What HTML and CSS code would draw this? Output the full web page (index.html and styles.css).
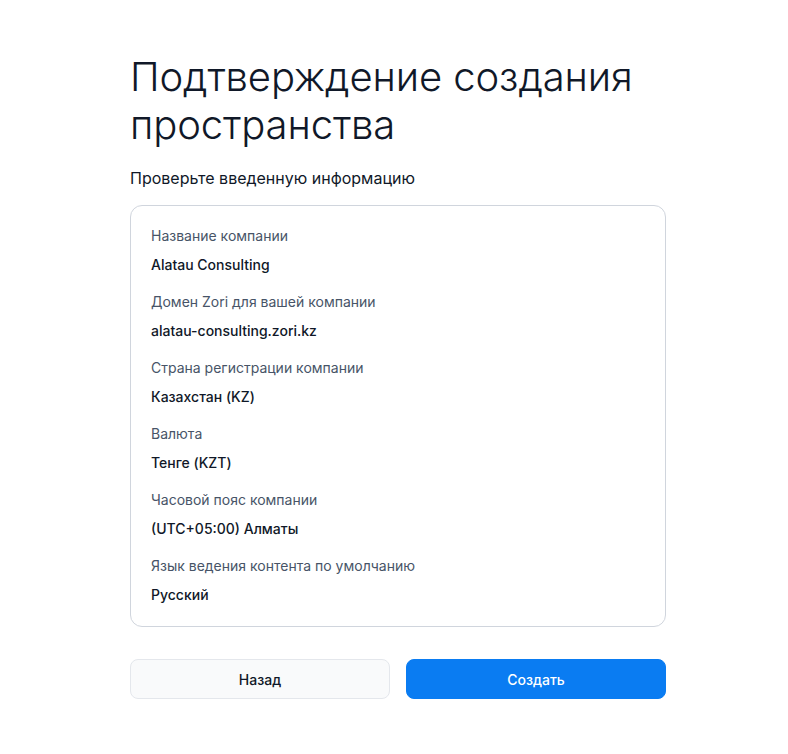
FILE: index.html
```html
<!DOCTYPE html>
<html lang="ru">
<head>
<meta charset="utf-8">
<title>Подтверждение создания пространства</title>
<link rel="stylesheet" href="styles.css">
</head>
<body>
<main class="page">
  <h1 class="title">Подтверждение создания пространства</h1>
  <p class="subtitle">Проверьте введенную информацию</p>
  <section class="card">
    <div class="item">
      <div class="label">Название компании</div>
      <div class="value">Alatau Consulting</div>
    </div>
    <div class="item">
      <div class="label">Домен Zori для вашей компании</div>
      <div class="value">alatau-consulting.zori.kz</div>
    </div>
    <div class="item">
      <div class="label">Страна регистрации компании</div>
      <div class="value">Казахстан (KZ)</div>
    </div>
    <div class="item">
      <div class="label">Валюта</div>
      <div class="value">Тенге (KZT)</div>
    </div>
    <div class="item">
      <div class="label">Часовой пояс компании</div>
      <div class="value">(UTC+05:00) Алматы</div>
    </div>
    <div class="item">
      <div class="label">Язык ведения контента по умолчанию</div>
      <div class="value">Русский</div>
    </div>
  </section>
  <div class="actions">
    <button class="btn btn-secondary" type="button">Назад</button>
    <button class="btn btn-primary" type="button">Создать</button>
  </div>
</main>
</body>
</html>
```
FILE: styles.css
```css
* { box-sizing: border-box; }
html, body { margin: 0; background: #ffffff; }
body {
  font-family: Inter, "Noto Sans", "Liberation Sans", sans-serif;
  color: #101828;
  padding-left: 8px;
}
.page {
  width: 536px;
  margin: 0 auto;
  padding-top: 53px;
}
.title {
  margin: 0;
  font-size: 40px;
  line-height: 48px;
  font-weight: 300;
  color: #101828;
  letter-spacing: -0.1px;
}
.subtitle {
  margin: 17px 0 0;
  font-size: 16px;
  line-height: 24px;
  color: #101828;
}
.card {
  margin-top: 15px;
  border: 1px solid #d0d5dd;
  border-radius: 12px;
  padding: 20px 20px 21px 20px;
  display: flex;
  flex-direction: column;
  gap: 17px;
}
.item { display: flex; flex-direction: column; gap: 9px; }
.label {
  font-size: 14px;
  line-height: 20px;
  color: #475467;
}
.value {
  font-size: 14px;
  line-height: 20px;
  font-weight: 500;
  color: #101828;
}
.actions {
  margin-top: 32px;
  display: grid;
  grid-template-columns: 1fr 1fr;
  gap: 16px;
}
.btn {
  height: 40px;
  border-radius: 8px;
  font-family: inherit;
  font-size: 14px;
  font-weight: 500;
  cursor: pointer;
}
.btn-secondary {
  background: #f9fafb;
  border: 1px solid #e4e7ec;
  color: #101828;
}
.btn-primary {
  background: #0a7cf2;
  border: 1px solid #0a7cf2;
  color: #ffffff;
}
```
